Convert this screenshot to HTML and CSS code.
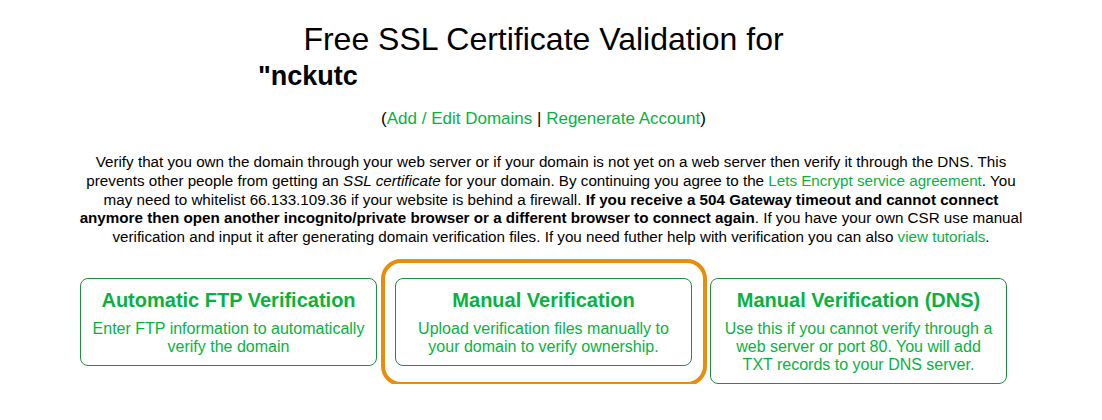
FILE: index.html
```html
<!DOCTYPE html>
<html lang="en">
<head>
    <meta charset="UTF-8">
    <meta name="viewport" content="width=device-width, initial-scale=1.0">
    <title>Free SSL Certificate Validation</title>
    <link rel="stylesheet" href="styles.css">
</head>
<body>
    <div class="page">
        <h1 class="title">
            <span class="title-main">Free SSL Certificate Validation for</span>
            <span class="title-domain">"nckutc</span>
        </h1>

        <div class="account-links">
            (<a href="#">Add / Edit Domains</a> | <a href="#">Regenerate Account</a>)
        </div>

        <p class="intro">
            Verify that you own the domain through your web server or if your domain is not yet on a web server then verify it through the DNS. This prevents other people from getting an <em>SSL certificate</em> for your domain. By continuing you agree to the <a href="#">Lets Encrypt service agreement</a>. You may need to whitelist 66.133.109.36 if your website is behind a firewall. <strong>If you receive a 504 Gateway timeout and cannot connect anymore then open another incognito/private browser or a different browser to connect again</strong>. If you have your own CSR use manual verification and input it after generating domain verification files. If you need futher help with verification you can also <a href="#">view tutorials</a>.
        </p>

        <div class="methods">
            <a class="method" href="#">
                <span class="method-title">Automatic FTP Verification</span>
                <span class="method-desc">Enter FTP information to automatically verify the domain</span>
            </a>
            <a class="method selected" href="#">
                <span class="method-title">Manual Verification</span>
                <span class="method-desc">Upload verification files manually to your domain to verify ownership.</span>
            </a>
            <a class="method" href="#">
                <span class="method-title">Manual Verification (DNS)</span>
                <span class="method-desc">Use this if you cannot verify through a web server or port 80. You will add TXT records to your DNS server.</span>
            </a>
        </div>
    </div>
</body>
</html>
```

FILE: styles.css
```css
body {
    margin: 0;
    font-family: "Liberation Sans", Arial, sans-serif;
    color: #000;
    background: #fff;
}
a {
    color: #09b23f;
    text-decoration: none;
}
.page {
    padding-top: 21px;
}
.title {
    width: 571px;
    margin: 0 auto;
    padding-right: 15px;
    font-weight: normal;
}
.title-main {
    display: block;
    text-align: center;
    font-size: 32px;
    line-height: 37px;
}
.title-domain {
    display: block;
    margin-top: 3px;
    font-size: 27px;
    line-height: 31px;
    font-weight: bold;
}
.account-links {
    margin-top: 17px;
    padding-right: 15px;
    text-align: center;
    font-size: 17px;
    line-height: 20px;
}
.intro {
    width: 946px;
    margin: 24px auto 0;
    text-align: center;
    font-size: 15.2px;
    line-height: 18.75px;
}
.methods {
    display: flex;
    justify-content: center;
    align-items: flex-start;
    gap: 18px;
    margin-top: 31px;
    padding-right: 15px;
}
.method {
    position: relative;
    box-sizing: border-box;
    width: 297px;
    padding: 9px 10px 9px;
    border: 1px solid #1e8f3e;
    border-radius: 8px;
    text-align: center;
}
.method.selected::before {
    content: "";
    position: absolute;
    top: -20px;
    left: -15px;
    right: -16px;
    bottom: -21px;
    border: 4px solid #e88e0c;
    border-radius: 20px;
}
.method-title {
    display: block;
    font-size: 20px;
    line-height: 24px;
    font-weight: bold;
}
.method-desc {
    display: block;
    margin-top: 8px;
    font-size: 16px;
    line-height: 18px;
}
```
